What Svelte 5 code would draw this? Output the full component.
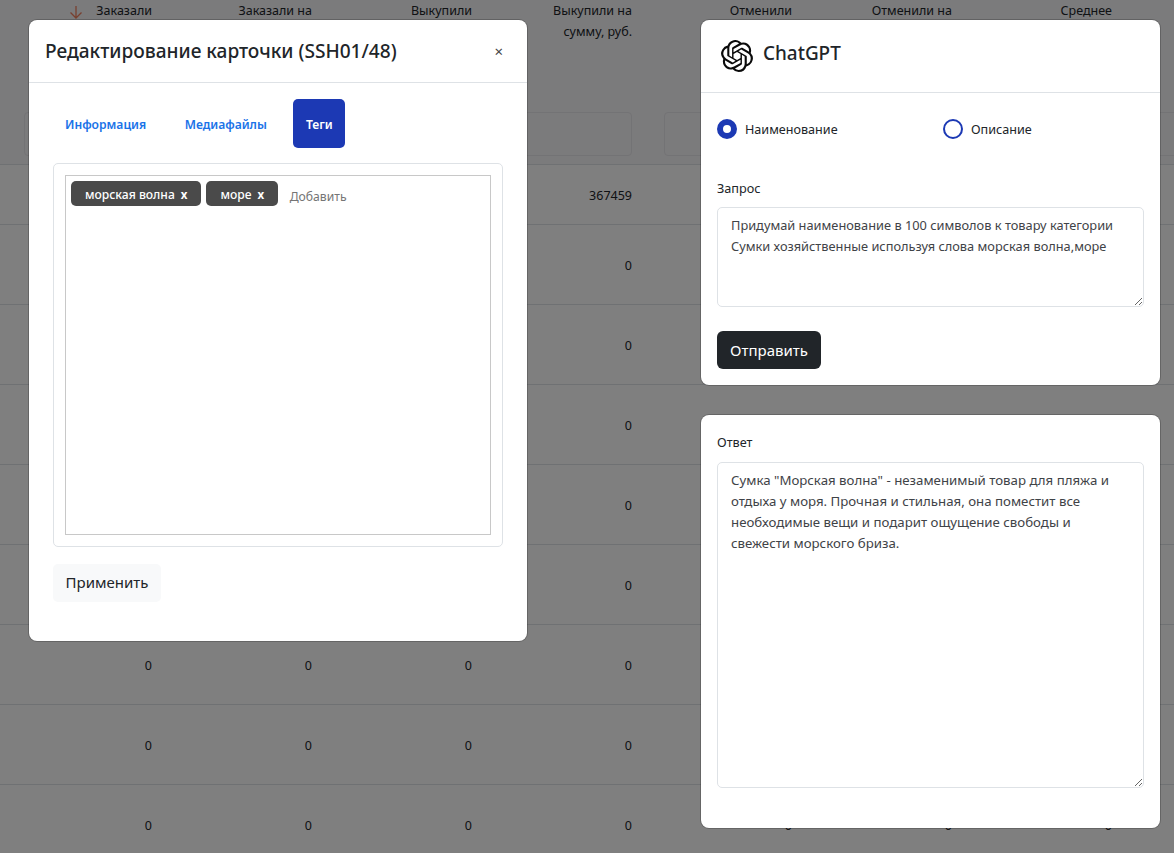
<script>
  const headers = ['Заказали', 'Заказали на', 'Выкупили', 'Выкупили на сумму, руб.', 'Отменили', 'Отменили на', 'Среднее', ''];
  const rows = [
    ['', '', '', '367459', '', '', '', ''],
    ...Array.from({ length: 8 }, () => ['0', '0', '0', '0', '0', '0', '0', ''])
  ];
  const tags = ['морская волна', 'море'];
  const tabs = ['Информация', 'Медиафайлы', 'Теги'];
  const request = 'Придумай наименование в 100 символов к товару категории Сумки хозяйственные используя слова морская волна,море';
  const answer = 'Сумка "Морская волна" - незаменимый товар для пляжа и отдыха у моря. Прочная и стильная, она поместит все необходимые вещи и подарит ощущение свободы и свежести морского бриза.';
  let mode = $state('name');
</script>

<div class="page">
  <div class="table">
    <div class="head">
      {#each headers as h, i}
        <div class="th">
          {#if i === 0}
            <svg class="arrow" width="14" height="14" viewBox="0 0 14 14" fill="none" stroke="#f0805f" stroke-width="1.3"><path d="M7 1v12M1.5 7.5 7 13l5.5-5.5" /></svg>
          {/if}
          <span>{h}</span>
        </div>
      {/each}
    </div>
    <div class="filters">
      <div class="filter wide"></div>
      <div class="filter wider"></div>
    </div>
    {#each rows as row, r}
      <div class="row" class:first={r === 0}>
        {#each row as c}
          <div class="td">{c}</div>
        {/each}
      </div>
    {/each}
  </div>

  <div class="backdrop"></div>

  <section class="modal">
    <header class="modal-head">
      <h2>Редактирование карточки (SSH01/48)</h2>
      <span class="close">×</span>
    </header>
    <div class="modal-body">
      <nav class="tabs">
        {#each tabs as t, i}
          <span class="tab" class:active={i === 2}>{t}</span>
        {/each}
      </nav>
      <div class="tag-card">
        <div class="tag-box">
          {#each tags as t}
            <span class="tag">{t}<b>x</b></span>
          {/each}
          <span class="placeholder">Добавить</span>
        </div>
      </div>
      <button class="apply">Применить</button>
    </div>
  </section>

  <aside class="side">
    <section class="card">
      <header class="gpt-head">
        <svg class="logo" width="32" height="32" viewBox="0 0 24 24" fill="#0b0b0b"><path d="M22.2819 9.8211a5.9847 5.9847 0 0 0-.5157-4.9108 6.0462 6.0462 0 0 0-6.5098-2.9A6.0651 6.0651 0 0 0 4.9807 4.1818a5.9847 5.9847 0 0 0-3.9977 2.9 6.0462 6.0462 0 0 0 .7427 7.0966 5.98 5.98 0 0 0 .511 4.9107 6.051 6.051 0 0 0 6.5146 2.9001A5.9847 5.9847 0 0 0 13.2599 24a6.0557 6.0557 0 0 0 5.7718-4.2058 5.9894 5.9894 0 0 0 3.9977-2.9001 6.0557 6.0557 0 0 0-.7475-7.0729zm-9.022 12.6081a4.4755 4.4755 0 0 1-2.8764-1.0408l.1419-.0804 4.7783-2.7582a.7948.7948 0 0 0 .3927-.6813v-6.7369l2.02 1.1686a.071.071 0 0 1 .038.052v5.5826a4.504 4.504 0 0 1-4.4945 4.4944zm-9.6607-4.1254a4.4708 4.4708 0 0 1-.5346-3.0137l.142.0852 4.783 2.7582a.7712.7712 0 0 0 .7806 0l5.8428-3.3685v2.3324a.0804.0804 0 0 1-.0332.0615L9.74 19.9502a4.4992 4.4992 0 0 1-6.1408-1.6464zM2.3408 7.8956a4.485 4.485 0 0 1 2.3655-1.9728V11.6a.7664.7664 0 0 0 .3879.6765l5.8144 3.3543-2.0201 1.1685a.0757.0757 0 0 1-.071 0l-4.8303-2.7865A4.504 4.504 0 0 1 2.3408 7.872zm16.5963 3.8558L13.1038 8.364 15.1192 7.2a.0757.0757 0 0 1 .071 0l4.8303 2.7913a4.4944 4.4944 0 0 1-.6765 8.1042v-5.6772a.79.79 0 0 0-.407-.667zm2.0107-3.0231l-.142-.0852-4.7735-2.7818a.7759.7759 0 0 0-.7854 0L9.409 9.2297V6.8974a.0662.0662 0 0 1 .0284-.0615l4.8303-2.7866a4.4992 4.4992 0 0 1 6.6802 4.66zM8.3065 12.863l-2.02-1.1638a.0804.0804 0 0 1-.038-.0567V6.0742a4.4992 4.4992 0 0 1 7.3757-3.4537l-.142.0805L8.704 5.459a.7948.7948 0 0 0-.3927.6813zm1.0976-2.3654l2.602-1.4998 2.6069 1.4998v2.9994l-2.5974 1.4997-2.6067-1.4997Z" /></svg>
        <h3>ChatGPT</h3>
      </header>
      <div class="gpt-body">
        <div class="radios">
          <label class="radio"><input type="radio" name="mode" value="name" bind:group={mode} />Наименование</label>
          <label class="radio"><input type="radio" name="mode" value="desc" bind:group={mode} />Описание</label>
        </div>
        <label class="label" for="req">Запрос</label>
        <textarea id="req" class="req" readonly value={request}></textarea>
        <button class="send">Отправить</button>
      </div>
    </section>

    <section class="card answer">
      <label class="label" for="ans">Ответ</label>
      <textarea id="ans" class="ans" readonly value={answer}></textarea>
    </section>
  </aside>
</div>

<style>
  :global(body) {
    margin: 0;
    background: #fff;
  }
  .page {
    position: relative;
    width: 1174px;
    height: 853px;
    overflow: hidden;
    font-family: "Noto Sans", "Open Sans", sans-serif;
    font-size: 12.5px;
    color: #212529;
  }
  .table {
    margin-left: -8px;
    width: 1400px;
  }
  .head {
    display: grid;
    grid-template-columns: repeat(8, 160px);
    height: 112px;
    background: #f7f6f9;
    line-height: 21px;
  }
  .th {
    position: relative;
    text-align: right;
    padding: 0 0 0 70px;
    box-sizing: border-box;
    line-height: 21px;
  }
  .arrow {
    position: absolute;
    left: 77px;
    top: 5px;
  }
  .filters {
    display: flex;
    gap: 32px;
    height: 53px;
    padding-left: 32px;
    background: #f7f6f9;
    border-bottom: 1px solid #dee2e6;
    box-sizing: border-box;
  }
  .filter {
    height: 44px;
    box-sizing: border-box;
    border: 1px solid #e6e6ea;
    border-radius: 4px;
  }
  .wide {
    width: 608px;
  }
  .wider {
    width: 640px;
  }
  .row {
    display: grid;
    grid-template-columns: repeat(8, 160px);
    height: 80px;
    align-items: center;
    border-bottom: 1px solid #dee2e6;
    box-sizing: border-box;
    background: #fff;
  }
  .row.first {
    height: 60px;
  }
  .td {
    text-align: right;
    margin-top: 2px;
  }
  .backdrop {
    position: absolute;
    inset: 0;
    background: rgba(0, 0, 0, 0.5);
  }
  .modal {
    position: absolute;
    left: 29px;
    top: 20px;
    width: 498px;
    height: 621px;
    background: #fff;
    border-radius: 8px;
    box-shadow: 0 0 0 1px rgba(0, 0, 0, 0.2);
  }
  .modal-head {
    display: flex;
    align-items: center;
    justify-content: space-between;
    height: 63px;
    padding: 0 24px 0 16px;
    border-bottom: 1px solid #dee2e6;
    box-sizing: border-box;
  }
  h2 {
    margin: 0;
    font-size: 19.1px;
    font-weight: 500;
    color: #212529;
  }
  .close {
    font-size: 15px;
    color: #444;
    line-height: 1;
  }
  .modal-body {
    padding: 16px 24px;
  }
  .tabs {
    display: flex;
    gap: 14.5px;
    height: 49px;
    margin-bottom: 15px;
  }
  .tab {
    display: flex;
    align-items: center;
    padding: 1px 12px 0;
    border-radius: 5px;
    color: #1a73e8;
    font-weight: 600;
    font-size: 12.1px;
  }
  .tab.active {
    padding: 1px 12.5px 0;
    background: #1c39b4;
    color: #fff;
  }
  .tag-card {
    height: 384px;
    padding: 11px;
    box-sizing: border-box;
    border: 1px solid #dee2e6;
    border-radius: 5px;
  }
  .tag-box {
    display: flex;
    align-items: flex-start;
    gap: 5px;
    height: 360px;
    padding: 5px;
    box-sizing: border-box;
    border: 1px solid #c8c8c8;
  }
  .tag {
    display: flex;
    align-items: center;
    height: 25px;
    padding: 1px 14px 0;
    box-sizing: border-box;
    border-radius: 5px;
    background: #4a4a4a;
    color: #fff;
    font-size: 12.1px;
    font-weight: 500;
  }
  .tag b {
    margin-left: 6px;
    font-weight: 700;
    font-size: 11.5px;
  }
  .placeholder {
    margin-left: 6.5px;
    line-height: 32px;
    color: #757575;
    font-size: 12.2px;
  }
  button {
    font-family: inherit;
    border: 0;
    cursor: pointer;
  }
  .apply {
    display: block;
    margin-top: 17px;
    width: 108px;
    height: 38px;
    padding: 0 0 2px;
    border-radius: 5px;
    background: #f8f9fa;
    color: #212529;
    font-size: 15px;
  }
  .side {
    position: absolute;
    left: 701px;
    top: 20px;
    width: 459px;
    display: flex;
    flex-direction: column;
    gap: 30px;
  }
  .card {
    background: #fff;
    border-radius: 8px;
    box-shadow: 0 0 0 1px rgba(0, 0, 0, 0.2);
  }
  .gpt-head {
    display: flex;
    align-items: center;
    gap: 10px;
    height: 73px;
    padding: 0 20px;
    border-bottom: 1px solid #dee2e6;
    box-sizing: border-box;
  }
  h3 {
    margin: 0 0 6px;
    font-size: 18.9px;
    font-weight: 500;
    color: #212529;
  }
  .gpt-body {
    padding: 26px 16px 16px;
    height: 292px;
    box-sizing: border-box;
  }
  .radios {
    display: grid;
    grid-template-columns: 226px 1fr;
    height: 20px;
    margin-bottom: 39px;
  }
  .radio {
    display: flex;
    align-items: center;
    gap: 8px;
    font-size: 12.6px;
  }
  input[type="radio"] {
    appearance: none;
    width: 20px;
    height: 20px;
    margin: 0;
    border-radius: 50%;
    border: 2px solid #1c39b4;
    box-sizing: border-box;
    background: #fff;
  }
  input[type="radio"]:checked {
    border-width: 6px;
  }
  .label {
    display: block;
    font-size: 12.7px;
    line-height: 20px;
    margin-bottom: 9px;
  }
  .answer .label {
    margin-bottom: 10px;
  }
  textarea {
    display: block;
    width: 100%;
    box-sizing: border-box;
    padding: 7px 13px;
    border: 1px solid #dee2e6;
    border-radius: 5px;
    font-family: inherit;
    font-size: 12.8px;
    line-height: 21px;
    color: #3f4347;
    outline: none;
    resize: vertical;
  }
  .req {
    height: 100px;
  }
  .send {
    display: block;
    margin-top: 24px;
    width: 104px;
    height: 38px;
    padding: 0;
    border-radius: 6px;
    background: #212529;
    color: #fff;
    font-size: 15px;
  }
  .answer {
    height: 413px;
    padding: 17px 16px 0;
    box-sizing: border-box;
  }
  .ans {
    height: 326px;
    font-size: 13.25px;
  }
</style>
